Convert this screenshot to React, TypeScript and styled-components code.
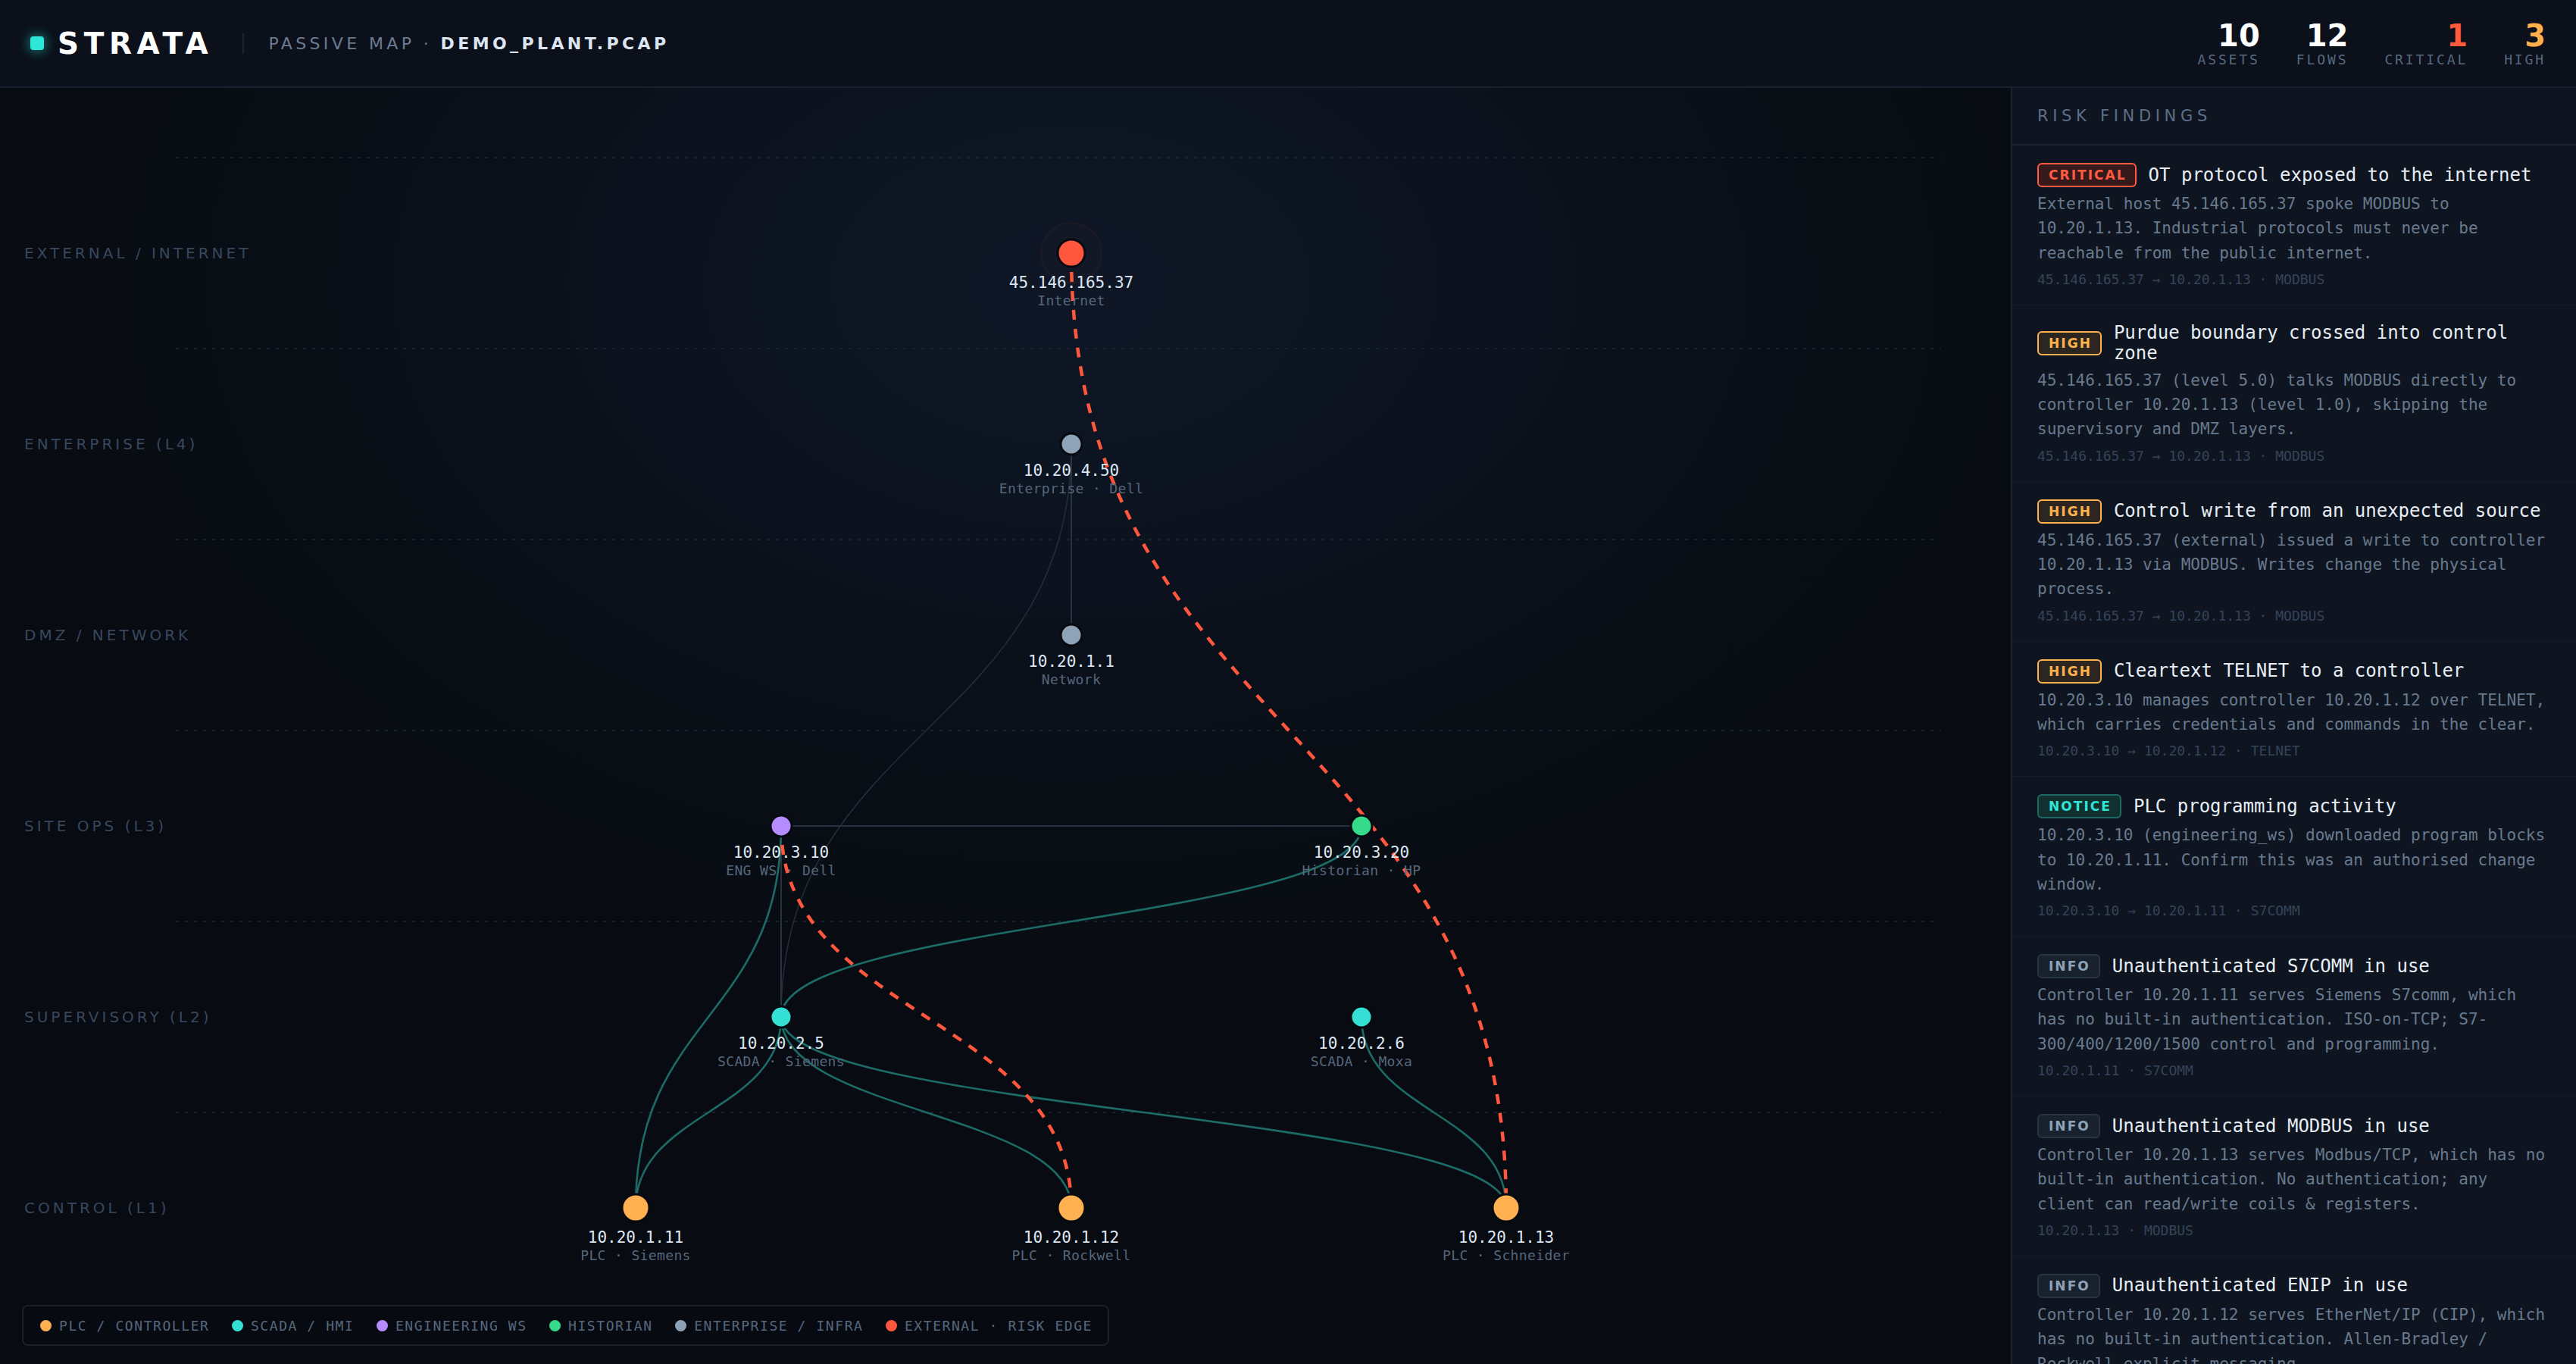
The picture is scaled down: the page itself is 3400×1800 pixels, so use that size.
import styled, { createGlobalStyle } from "styled-components";

const SANS = `"DejaVu Sans", "Liberation Sans", sans-serif`;
const MONO = `"DejaVu Sans Mono", "Liberation Mono", monospace`;

const MAP_W = 2656;
const MAP_H = 1684;
const MAP_TOP = 116;
const LANE_H = 252;
const FIRST_LANE = 208;

const COLORS: Record<string, string> = {
  plc: "#ffb152",
  scada: "#34e0d4",
  eng: "#b48cff",
  historian: "#37d98b",
  infra: "#8ea2b8",
  external: "#ff573d",
};

type NodeKind = keyof typeof COLORS;

type GraphNode = {
  id: string;
  ip: string;
  sub: string;
  x: number;
  tier: number;
  kind: NodeKind;
};

const tiers = [
  "EXTERNAL / INTERNET",
  "ENTERPRISE (L4)",
  "DMZ / NETWORK",
  "SITE OPS (L3)",
  "SUPERVISORY (L2)",
  "CONTROL (L1)",
];

const nodes: GraphNode[] = [
  { id: "inet", ip: "45.146.165.37", sub: "Internet", x: 1414, tier: 0, kind: "external" },
  { id: "ent", ip: "10.20.4.50", sub: "Enterprise · Dell", x: 1414, tier: 1, kind: "infra" },
  { id: "net", ip: "10.20.1.1", sub: "Network", x: 1414, tier: 2, kind: "infra" },
  { id: "eng", ip: "10.20.3.10", sub: "ENG WS · Dell", x: 1031, tier: 3, kind: "eng" },
  { id: "hist", ip: "10.20.3.20", sub: "Historian · HP", x: 1797, tier: 3, kind: "historian" },
  { id: "scada5", ip: "10.20.2.5", sub: "SCADA · Siemens", x: 1031, tier: 4, kind: "scada" },
  { id: "scada6", ip: "10.20.2.6", sub: "SCADA · Moxa", x: 1797, tier: 4, kind: "scada" },
  { id: "plc11", ip: "10.20.1.11", sub: "PLC · Siemens", x: 839, tier: 5, kind: "plc" },
  { id: "plc12", ip: "10.20.1.12", sub: "PLC · Rockwell", x: 1414, tier: 5, kind: "plc" },
  { id: "plc13", ip: "10.20.1.13", sub: "PLC · Schneider", x: 1988, tier: 5, kind: "plc" },
];

type EdgeKind = "it" | "faint" | "ot" | "risk";

const edges: { from: string; to: string; kind: EdgeKind }[] = [
  { from: "ent", to: "net", kind: "it" },
  { from: "ent", to: "scada5", kind: "faint" },
  { from: "eng", to: "hist", kind: "it" },
  { from: "eng", to: "scada5", kind: "it" },
  { from: "eng", to: "plc11", kind: "ot" },
  { from: "hist", to: "scada5", kind: "ot" },
  { from: "scada5", to: "plc11", kind: "ot" },
  { from: "scada5", to: "plc12", kind: "ot" },
  { from: "scada5", to: "plc13", kind: "ot" },
  { from: "scada6", to: "plc13", kind: "ot" },
  { from: "inet", to: "plc13", kind: "risk" },
  { from: "eng", to: "plc12", kind: "risk" },
];

const legend = [
  { label: "PLC / CONTROLLER", color: COLORS.plc },
  { label: "SCADA / HMI", color: COLORS.scada },
  { label: "ENGINEERING WS", color: COLORS.eng },
  { label: "HISTORIAN", color: COLORS.historian },
  { label: "ENTERPRISE / INFRA", color: COLORS.infra },
  { label: "EXTERNAL · RISK EDGE", color: COLORS.external },
];

type Severity = "critical" | "high" | "notice" | "info";

const findings: { sev: Severity; title: string; desc: string; meta: string }[] = [
  {
    sev: "critical",
    title: "OT protocol exposed to the internet",
    desc: "External host 45.146.165.37 spoke MODBUS to 10.20.1.13. Industrial protocols must never be reachable from the public internet.",
    meta: "45.146.165.37 → 10.20.1.13 · MODBUS",
  },
  {
    sev: "high",
    title: "Purdue boundary crossed into control zone",
    desc: "45.146.165.37 (level 5.0) talks MODBUS directly to controller 10.20.1.13 (level 1.0), skipping the supervisory and DMZ layers.",
    meta: "45.146.165.37 → 10.20.1.13 · MODBUS",
  },
  {
    sev: "high",
    title: "Control write from an unexpected source",
    desc: "45.146.165.37 (external) issued a write to controller 10.20.1.13 via MODBUS. Writes change the physical process.",
    meta: "45.146.165.37 → 10.20.1.13 · MODBUS",
  },
  {
    sev: "high",
    title: "Cleartext TELNET to a controller",
    desc: "10.20.3.10 manages controller 10.20.1.12 over TELNET, which carries credentials and commands in the clear.",
    meta: "10.20.3.10 → 10.20.1.12 · TELNET",
  },
  {
    sev: "notice",
    title: "PLC programming activity",
    desc: "10.20.3.10 (engineering_ws) downloaded program blocks to 10.20.1.11. Confirm this was an authorised change window.",
    meta: "10.20.3.10 → 10.20.1.11 · S7COMM",
  },
  {
    sev: "info",
    title: "Unauthenticated S7COMM in use",
    desc: "Controller 10.20.1.11 serves Siemens S7comm, which has no built-in authentication. ISO-on-TCP; S7-300/400/1200/1500 control and programming.",
    meta: "10.20.1.11 · S7COMM",
  },
  {
    sev: "info",
    title: "Unauthenticated MODBUS in use",
    desc: "Controller 10.20.1.13 serves Modbus/TCP, which has no built-in authentication. No authentication; any client can read/write coils & registers.",
    meta: "10.20.1.13 · MODBUS",
  },
  {
    sev: "info",
    title: "Unauthenticated ENIP in use",
    desc: "Controller 10.20.1.12 serves EtherNet/IP (CIP), which has no built-in authentication. Allen-Bradley / Rockwell explicit messaging.",
    meta: "10.20.1.12 · ENIP",
  },
];

const badgeTheme: Record<Severity, { fg: string; bg: string; border: string }> = {
  critical: { fg: "#ff5b41", bg: "#35191b", border: "#ff5b41" },
  high: { fg: "#ffb34d", bg: "#2c2520", border: "#ffb34d" },
  notice: { fg: "#2ee6d6", bg: "#11302f", border: "#1e6b65" },
  info: { fg: "#8ea2b8", bg: "#18212e", border: "#283344" },
};

const stats = [
  { value: "10", label: "ASSETS", color: "#ffffff" },
  { value: "12", label: "FLOWS", color: "#ffffff" },
  { value: "1", label: "CRITICAL", color: "#ff5a3c" },
  { value: "3", label: "HIGH", color: "#ffb04d" },
];

const nodeY = (tier: number) => FIRST_LANE + LANE_H / 2 + LANE_H * tier;
const radius = (n: GraphNode) => (n.kind === "plc" || n.kind === "external" ? 18 : 14);

const edgePath = (a: GraphNode, b: GraphNode) => {
  const y1 = nodeY(a.tier);
  const y2 = nodeY(b.tier);
  const my = (y1 + y2) / 2;
  return `M ${a.x} ${y1} C ${a.x} ${my}, ${b.x} ${my}, ${b.x} ${y2}`;
};

const App = () => {
  const byId = Object.fromEntries(nodes.map((n) => [n.id, n]));
  const order: EdgeKind[] = ["faint", "it", "ot", "risk"];
  const sortedEdges = [...edges].sort((a, b) => order.indexOf(a.kind) - order.indexOf(b.kind));

  return (
    <>
      <GlobalStyle />
      <Shell>
        <Header>
          <Brand>
            <BrandDot />
            <Wordmark>STRATA</Wordmark>
            <Divider />
            <Context>
              PASSIVE MAP · <strong>DEMO_PLANT.PCAP</strong>
            </Context>
          </Brand>
          <Stats>
            {stats.map((s) => (
              <Stat key={s.label}>
                <StatValue $color={s.color}>{s.value}</StatValue>
                <StatLabel>{s.label}</StatLabel>
              </Stat>
            ))}
          </Stats>
        </Header>

        <Body>
          <MapArea>
            <Lanes>
              {tiers.map((t) => (
                <Lane key={t}>
                  <LaneLabel>{t}</LaneLabel>
                </Lane>
              ))}
            </Lanes>

            <Graph width={MAP_W} height={MAP_H} viewBox={`0 ${MAP_TOP} ${MAP_W} ${MAP_H}`}>
              {sortedEdges.map((e, i) => (
                <Edge key={i} d={edgePath(byId[e.from], byId[e.to])} $kind={e.kind} />
              ))}
              {nodes.map((n) => {
                const cy = nodeY(n.tier);
                const r = radius(n);
                return (
                  <g key={n.id}>
                    {n.kind === "external" && <Halo cx={n.x} cy={cy} r={40} />}
                    <NodeDot cx={n.x} cy={cy} r={r} fill={COLORS[n.kind]} />
                    <NodeIp x={n.x} y={cy + r + 28} textAnchor="middle">
                      {n.ip}
                    </NodeIp>
                    <NodeSub x={n.x} y={cy + r + 51} textAnchor="middle">
                      {n.sub}
                    </NodeSub>
                  </g>
                );
              })}
            </Graph>

            <Legend>
              {legend.map((l) => (
                <LegendItem key={l.label}>
                  <LegendDot $color={l.color} />
                  {l.label}
                </LegendItem>
              ))}
            </Legend>
          </MapArea>

          <Panel>
            <PanelHeader>RISK FINDINGS</PanelHeader>
            <FindingList>
              {findings.map((f, i) => (
                <Finding key={i}>
                  <FindingHead>
                    <Badge $sev={f.sev}>{f.sev.toUpperCase()}</Badge>
                    <FindingTitle>{f.title}</FindingTitle>
                  </FindingHead>
                  <FindingDesc>{f.desc}</FindingDesc>
                  <FindingMeta>{f.meta}</FindingMeta>
                </Finding>
              ))}
            </FindingList>
          </Panel>
        </Body>
      </Shell>
    </>
  );
};

const GlobalStyle = createGlobalStyle`
  html, body, #root {
    height: 100%;
  }
  body {
    margin: 0;
    background: #080c12;
    font-family: ${SANS};
    overflow: hidden;
  }
`;

const Shell = styled.div`
  display: flex;
  flex-direction: column;
  height: 100vh;
`;

const Header = styled.header`
  height: 114px;
  flex-shrink: 0;
  display: flex;
  align-items: center;
  justify-content: space-between;
  padding: 0 40px;
  background: #0b101a;
  border-bottom: 2px solid #18212e;
`;

const Brand = styled.div`
  display: flex;
  align-items: center;
`;

const BrandDot = styled.span`
  width: 18px;
  height: 18px;
  border-radius: 4px;
  background: #2ee6d6;
  box-shadow: 0 0 14px 3px rgba(46, 230, 214, 0.4);
  margin-right: 18px;
`;

const Wordmark = styled.span`
  font-family: ${SANS};
  font-size: 39px;
  font-weight: 700;
  letter-spacing: 0.17em;
  color: #ffffff;
`;

const Divider = styled.span`
  width: 2px;
  height: 27px;
  background: #1c2532;
  margin: 0 32px 0 39px;
`;

const Context = styled.span`
  font-family: ${SANS};
  font-size: 22px;
  letter-spacing: 0.2em;
  color: #6a7c93;

  strong {
    color: #dce6f2;
    font-weight: 700;
  }
`;

const Stats = styled.div`
  display: flex;
  align-items: center;
  gap: 48px;
`;

const Stat = styled.div`
  display: flex;
  flex-direction: column;
  align-items: flex-end;
  gap: 3px;
`;

const StatValue = styled.span<{ $color: string }>`
  font-family: ${SANS};
  font-size: 40px;
  font-weight: 700;
  line-height: 1;
  color: ${({ $color }) => $color};
`;

const StatLabel = styled.span`
  font-family: ${MONO};
  font-size: 18px;
  line-height: 1;
  letter-spacing: 0.16em;
  color: #56697f;
`;

const Body = styled.div`
  flex: 1;
  min-height: 0;
  display: flex;
`;

const MapArea = styled.main`
  flex: 1;
  min-width: 0;
  position: relative;
  overflow: hidden;
  background: radial-gradient(
    ellipse 1500px 1000px at 1414px 260px,
    #0f1727 0%,
    #0c131f 35%,
    #090e16 65%,
    #080b11 100%
  );
`;

const Lanes = styled.div`
  display: flex;
  flex-direction: column;
  padding-top: 92px;
`;

const Lane = styled.div`
  position: relative;
  height: ${LANE_H}px;
  display: flex;
  align-items: center;
  padding-left: 32px;

  &::before {
    content: "";
    position: absolute;
    top: -1px;
    left: 232px;
    right: 93px;
    height: 2px;
    background-image: linear-gradient(to right, #18212e 4px, transparent 4px);
    background-size: 12px 2px;
  }
`;

const LaneLabel = styled.span`
  font-family: ${SANS};
  font-size: 20px;
  letter-spacing: 0.2em;
  color: #37485e;
`;

const Graph = styled.svg`
  position: absolute;
  top: 0;
  left: 0;
`;

const Edge = styled.path<{ $kind: EdgeKind }>`
  fill: none;
  stroke: ${({ $kind }) =>
    $kind === "risk" ? "#ff573d" : $kind === "ot" ? "#1c6b66" : $kind === "faint" ? "#232c39" : "#283240"};
  stroke-width: ${({ $kind }) => ($kind === "risk" ? 4.5 : $kind === "ot" ? 2.6 : $kind === "faint" ? 1.6 : 2)};
  stroke-dasharray: ${({ $kind }) => ($kind === "risk" ? "13 12" : "none")};
`;

const Halo = styled.circle`
  fill: rgba(255, 87, 61, 0.02);
  stroke: rgba(255, 87, 61, 0.06);
  stroke-width: 2;
`;

const NodeDot = styled.circle`
  stroke: #070a10;
  stroke-width: 3;
`;

const NodeIp = styled.text`
  font-family: ${MONO};
  font-size: 21px;
  fill: #dce6f2;
`;

const NodeSub = styled.text`
  font-family: ${MONO};
  font-size: 18px;
  letter-spacing: 0.02em;
  fill: #56677c;
`;

const Legend = styled.div`
  position: absolute;
  left: 29px;
  bottom: 24px;
  height: 50px;
  display: flex;
  align-items: center;
  gap: 29.5px;
  padding: 0 20px 0 22px;
  background: #070a10;
  border: 2px solid #19212d;
  border-radius: 8px;
`;

const LegendItem = styled.span`
  display: flex;
  align-items: center;
  gap: 10px;
  font-family: ${MONO};
  font-size: 18px;
  letter-spacing: 0.087em;
  color: #56687e;
`;

const LegendDot = styled.span<{ $color: string }>`
  width: 15px;
  height: 15px;
  border-radius: 50%;
  background: ${({ $color }) => $color};
`;

const Panel = styled.aside`
  width: 744px;
  flex-shrink: 0;
  display: flex;
  flex-direction: column;
  background: #0e1520;
  border-left: 2px solid #1b2431;
`;

const PanelHeader = styled.div`
  height: 74px;
  flex-shrink: 0;
  display: flex;
  align-items: center;
  padding-left: 33px;
  border-bottom: 2px solid #1b2431;
  font-family: ${SANS};
  font-size: 21px;
  letter-spacing: 0.27em;
  color: #5d6f87;
`;

const FindingList = styled.div`
  flex: 1;
  min-height: 0;
  overflow: hidden;
`;

const Finding = styled.section`
  padding: 23px 35px 20px 33px;
  border-bottom: 1px solid #131b27;
`;

const FindingHead = styled.div`
  display: flex;
  align-items: center;
  gap: 16px;
`;

const Badge = styled.span<{ $sev: Severity }>`
  flex-shrink: 0;
  font-family: ${SANS};
  font-size: 17px;
  font-weight: 700;
  line-height: 20px;
  letter-spacing: 0.12em;
  padding: 4px 11px 4px 13px;
  border-radius: 6px;
  color: ${({ $sev }) => badgeTheme[$sev].fg};
  background: ${({ $sev }) => badgeTheme[$sev].bg};
  border: 2px solid ${({ $sev }) => badgeTheme[$sev].border};
`;

const FindingTitle = styled.h3`
  margin: 0;
  font-family: ${MONO};
  font-size: 24px;
  font-weight: 400;
  line-height: 27px;
  color: #e6edf5;
`;

const FindingDesc = styled.p`
  margin: 6px 0 0;
  font-family: ${MONO};
  font-size: 21px;
  line-height: 32.3px;
  color: #68798e;
`;

const FindingMeta = styled.div`
  margin-top: 5px;
  font-family: ${MONO};
  font-size: 18px;
  line-height: 27px;
  color: #35435a;
`;

export default App;
